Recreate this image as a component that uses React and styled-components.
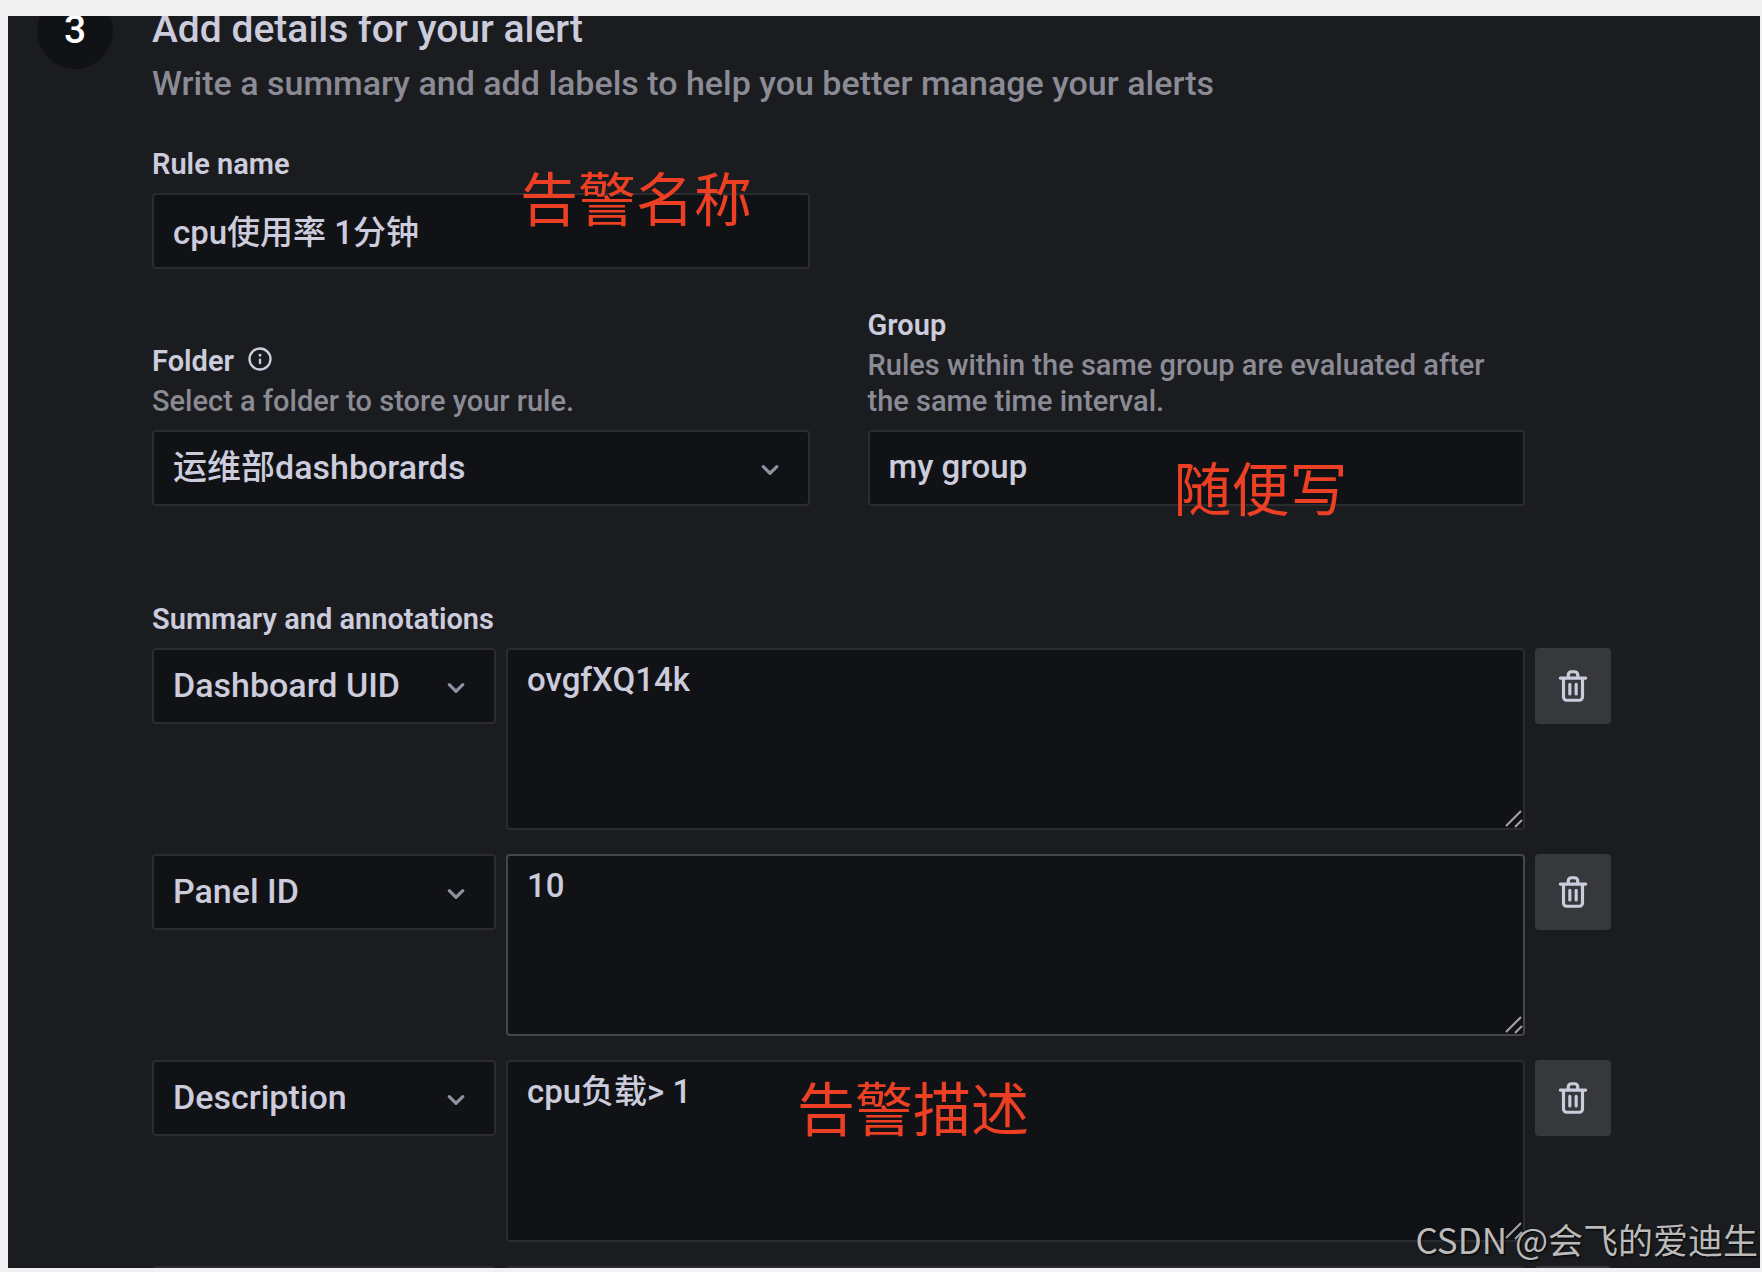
import React, { useState } from 'react';
import styled, { createGlobalStyle } from 'styled-components';

const GlobalStyle = createGlobalStyle`
    * {
        box-sizing: border-box;
    }

    body {
        margin: 0;
        background: #f1f1f1;
        color: #ccccdc;
        font-family: Roboto, "Noto Sans CJK SC", sans-serif;
        font-size: 34px;
        font-weight: 500;
    }

    input, select, textarea, button {
        font: inherit;
        color: inherit;
    }
`

const Page = styled.div`
    height: 100vh;
    padding: 16px 2px 4px 8px;
`

const Panel = styled.main`
    position: relative;
    height: 100%;
    overflow: hidden;
    background: #1b1c1f;
`

const Step = styled.section`
    display: flex;
    gap: 39px;
    margin-top: -23px;
    padding: 0 149px 0 29px;
`

const StepNumber = styled.div`
    flex: none;
    width: 76px;
    height: 76px;
    border-radius: 50%;
    background: #111216;
    color: #ffffff;
    font-size: 39px;
    line-height: 74px;
    text-align: center;
`

const StepBody = styled.div`
    flex: 1;
    min-width: 0;
`

const Title = styled.h2`
    margin: 0;
    font-size: 39px;
    font-weight: 500;
    line-height: 72px;
`

const Subtitle = styled.p`
    margin: 0 0 47px;
    color: #8b8b96;
    line-height: 36px;
`

const Fields = styled.div`
    display: grid;
    grid-template-columns: 1fr 1fr;
    gap: 40px 58px;
    align-items: end;
    margin: 0 86px 97px 0;
`

const Field = styled.div`
    grid-column: ${props => props.$first ? '1' : 'auto'};
`

const Label = styled.label`
    display: flex;
    align-items: center;
    gap: 12px;
    font-size: 29px;
    font-weight: 600;
    line-height: 32px;

    svg {
        margin-bottom: 4px;
    }
`

const Legend = styled.h3`
    margin: 0 0 13px;
    font-size: 29px;
    font-weight: 600;
    line-height: 32px;
`

const Hint = styled.p`
    margin: 6px 0 0;
    color: #8b8b96;
    font-size: 29px;
    line-height: 36px;
`

const Control = styled.div`
    position: relative;
    margin-top: ${props => props.$gap || 0}px;
`

const Input = styled.input`
    display: block;
    width: 100%;
    height: 76px;
    padding: 0 19px 3px;
    border: 2px solid #2b2c30;
    border-radius: 4px;
    background: #111216;
    font-size: 33px;
    outline: none;
`

const SelectBox = styled.select`
    display: block;
    width: 100%;
    height: 76px;
    padding: 0 64px 3px 19px;
    border: 2px solid #2b2c30;
    border-radius: 4px;
    background: #111216;
    appearance: none;
    outline: none;
`

const TextArea = styled.textarea`
    display: block;
    width: 100%;
    height: 182px;
    padding: 10px 19px;
    border: 2px solid ${props => props.$active ? '#45464b' : '#2b2c30'};
    border-radius: 4px;
    background: #111216;
    font-size: 33px;
    line-height: 40px;
    resize: none;
    outline: none;
`

const Rows = styled.div`
    display: flex;
    flex-direction: column;
    gap: 24px;
`

const Row = styled.div`
    display: grid;
    grid-template-columns: 344px 1fr 76px;
    gap: 10px;
    align-items: start;
`

const DeleteButton = styled.button`
    display: flex;
    align-items: center;
    justify-content: center;
    height: 76px;
    padding: 0;
    border: none;
    border-radius: 4px;
    background: #37383c;
`

const Arrow = styled.svg`
    position: absolute;
    top: 21px;
    right: 21px;
    color: #9090a0;
    pointer-events: none;
`

const Grip = styled.svg`
    position: absolute;
    right: 2px;
    bottom: 2px;
    pointer-events: none;
`

const Note = styled.span`
    position: absolute;
    top: ${props => props.$top}px;
    left: ${props => props.$left}px;
    color: #ec3f24;
    font-family: "Noto Sans CJK SC", sans-serif;
    font-size: 58px;
    font-weight: 400;
    line-height: 58px;
    white-space: nowrap;
    pointer-events: none;
`

const Watermark = styled.div`
    position: absolute;
    right: 2px;
    bottom: 9px;
    color: #bababa;
    font-family: "Noto Sans CJK SC", sans-serif;
    font-size: 35px;
    font-weight: 400;
    line-height: 40px;
    text-shadow: 1px 1px 2px #000000;
`

const InfoIcon = () => (
    <svg width="28" height="28" viewBox="0 0 24 24" fill="currentColor" aria-hidden="true">
        <path d="M12,2A10,10,0,1,0,22,12,10,10,0,0,0,12,2Zm0,18a8,8,0,1,1,8-8A8,8,0,0,1,12,20Zm0-8.5a1,1,0,0,0-1,1v3a1,1,0,0,0,2,0v-3A1,1,0,0,0,12,11.5Zm0-4a1.25,1.25,0,1,0,1.25,1.25A1.25,1.25,0,0,0,12,7.5Z" />
    </svg>
)

const TrashIcon = () => (
    <svg width="38" height="38" viewBox="0 0 24 24" fill="currentColor" aria-hidden="true">
        <path d="M10,18a1,1,0,0,0,1-1V11a1,1,0,0,0-2,0v6A1,1,0,0,0,10,18ZM20,6H16V5a3,3,0,0,0-3-3H11A3,3,0,0,0,8,5V6H4A1,1,0,0,0,4,8H5V19a3,3,0,0,0,3,3h8a3,3,0,0,0,3-3V8h1a1,1,0,0,0,0-2ZM10,5a1,1,0,0,1,1-1h2a1,1,0,0,1,1,1V6H10Zm7,14a1,1,0,0,1-1,1H8a1,1,0,0,1-1-1V8H17Zm-3-1a1,1,0,0,0,1-1V11a1,1,0,0,0-2,0v6A1,1,0,0,0,14,18Z" />
    </svg>
)

function Select({ options, ...rest }) {
    return (
        <>
            <SelectBox {...rest}>
                {options.map(option => <option key={option}>{option}</option>)}
            </SelectBox>
            <Arrow width="38" height="38" viewBox="0 0 24 24" fill="currentColor" aria-hidden="true">
                <path d="M17,9.17a1,1,0,0,0-1.41,0L12,12.71,8.46,9.17a1,1,0,0,0-1.41,0,1,1,0,0,0,0,1.42l4.24,4.24a1,1,0,0,0,1.42,0L17,10.59A1,1,0,0,0,17,9.17Z" />
            </Arrow>
        </>
    )
}

const initialAnnotations = [
    { key: 'Dashboard UID', value: 'ovgfXQ14k' },
    { key: 'Panel ID', value: '10', active: true },
    { key: 'Description', value: 'cpu负载> 1', note: '告警描述' },
    { key: '', value: '' },
];

function App() {
    const [annotations, setAnnotations] = useState(initialAnnotations);

    const removeAnnotation = (item) => {
        setAnnotations(annotations.filter(a => a !== item));
    }

    return (
        <>
            <GlobalStyle />
            <Page>
                <Panel>
                    <Step>
                        <StepNumber>3</StepNumber>
                        <StepBody>
                            <Title>Add details for your alert</Title>
                            <Subtitle>Write a summary and add labels to help you better manage your alerts</Subtitle>
                            <Fields>
                                <Field $first>
                                    <Label htmlFor="rule-name">Rule name</Label>
                                    <Control $gap={13}>
                                        <Input id="rule-name" type="text" defaultValue="cpu使用率 1分钟" />
                                        <Note $top={-26} $left={368}>告警名称</Note>
                                    </Control>
                                </Field>
                                <Field $first>
                                    <Label htmlFor="folder">Folder <InfoIcon /></Label>
                                    <Hint>Select a folder to store your rule.</Hint>
                                    <Control $gap={11}>
                                        <Select id="folder" options={['运维部dashborards']} />
                                    </Control>
                                </Field>
                                <Field>
                                    <Label htmlFor="group">Group</Label>
                                    <Hint>Rules within the same group are evaluated after the same time interval.</Hint>
                                    <Control $gap={11}>
                                        <Input id="group" type="text" defaultValue="my group" />
                                        <Note $top={27} $left={306}>随便写</Note>
                                    </Control>
                                </Field>
                            </Fields>
                            <Legend>Summary and annotations</Legend>
                            <Rows>
                                {annotations.map(item => (
                                    <Row key={item.key}>
                                        <Control>
                                            <Select aria-label="Annotation key" options={[item.key]} />
                                        </Control>
                                        <Control>
                                            <TextArea aria-label={item.key || 'Annotation value'} $active={item.active} defaultValue={item.value} />
                                            <Grip width="18" height="18" viewBox="0 0 18 18" stroke="#a5a5a5" strokeWidth="2" aria-hidden="true">
                                                <path d="M1 16L16 1M10 17L17 10" />
                                            </Grip>
                                            {item.note && <Note $top={17} $left={291}>{item.note}</Note>}
                                        </Control>
                                        <DeleteButton type="button" aria-label="Delete annotation" onClick={() => removeAnnotation(item)}>
                                            <TrashIcon />
                                        </DeleteButton>
                                    </Row>
                                ))}
                            </Rows>
                        </StepBody>
                    </Step>
                    <Watermark>CSDN @会飞的爱迪生</Watermark>
                </Panel>
            </Page>
        </>
    );
}

export default App;
